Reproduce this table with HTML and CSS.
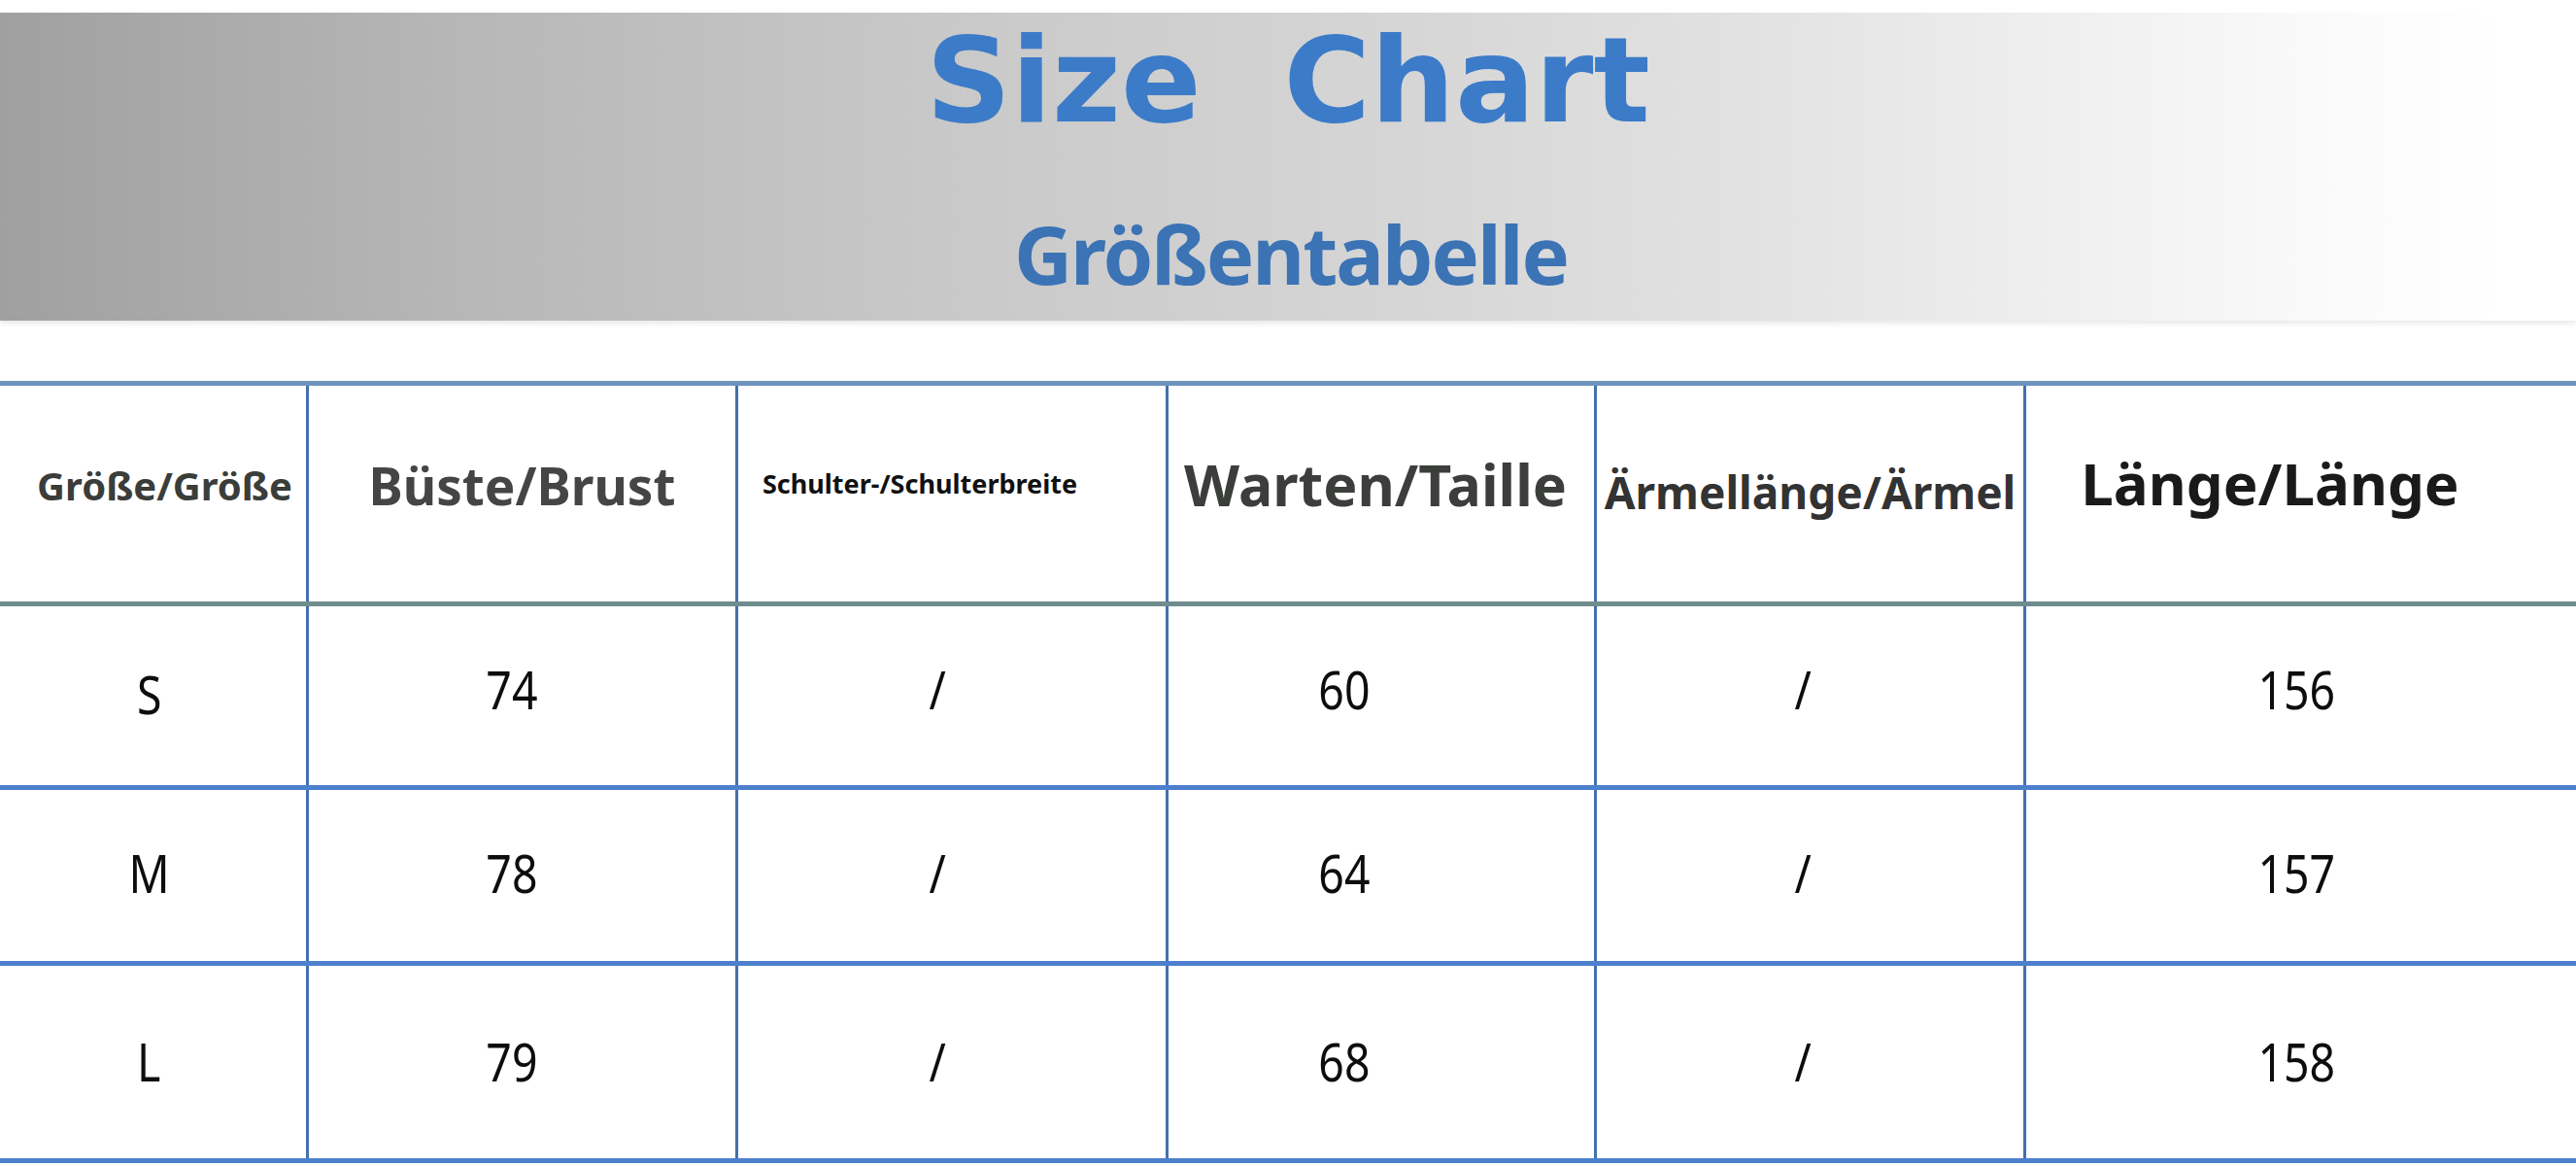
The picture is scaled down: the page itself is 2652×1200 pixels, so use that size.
FILE: index.html
```html
<!DOCTYPE html>
<html lang="de">
<head>
<meta charset="utf-8">
<title>Size Chart</title>
<link rel="stylesheet" href="styles.css">
</head>
<body>
<header class="banner">
  <h1 class="title">Size&nbsp; Chart</h1>
  <h2 class="subtitle">Größentabelle</h2>
</header>
<section class="chart">
  <div class="row head">
    <div class="cell"><span class="h h1">Größe/Größe</span></div>
    <div class="cell"><span class="h h2">Büste/Brust</span></div>
    <div class="cell"><span class="h h3">Schulter-/Schulterbreite</span></div>
    <div class="cell"><span class="h h4">Warten/Taille</span></div>
    <div class="cell"><span class="h h5">Ärmellänge/Ärmel</span></div>
    <div class="cell"><span class="h h6">Länge/Länge</span></div>
  </div>
  <div class="row body first r-s">
    <div class="cell"><span class="v">S</span></div>
    <div class="cell"><span class="v">74</span></div>
    <div class="cell"><span class="v">/</span></div>
    <div class="cell"><span class="v">60</span></div>
    <div class="cell"><span class="v">/</span></div>
    <div class="cell"><span class="v">156</span></div>
  </div>
  <div class="row body r-m">
    <div class="cell"><span class="v">M</span></div>
    <div class="cell"><span class="v">78</span></div>
    <div class="cell"><span class="v">/</span></div>
    <div class="cell"><span class="v">64</span></div>
    <div class="cell"><span class="v">/</span></div>
    <div class="cell"><span class="v">157</span></div>
  </div>
  <div class="row body last r-l">
    <div class="cell"><span class="v">L</span></div>
    <div class="cell"><span class="v">79</span></div>
    <div class="cell"><span class="v">/</span></div>
    <div class="cell"><span class="v">68</span></div>
    <div class="cell"><span class="v">/</span></div>
    <div class="cell"><span class="v">158</span></div>
  </div>
</section>
</body>
</html>
```
FILE: styles.css
```css
html, body {
  margin: 0;
  padding: 0;
  background: #ffffff;
}
body {
  width: 2652px;
  height: 1200px;
  overflow: hidden;
  font-family: "Noto Sans", "DejaVu Sans", sans-serif;
}
.banner {
  margin-top: 13px;
  height: 317px;
  box-sizing: border-box;
  padding-top: 9px;
  background: linear-gradient(to right, #a0a0a0 0%, #b7b7b7 18%, #c8c8c8 36%, #d6d6d6 55%, #e2e2e2 68%, #efefef 80%, #fafafa 90%, #ffffff 97%);
  box-shadow: 0 -3px 4px rgba(255,255,255,0.9), 0 3px 5px rgba(190,190,190,0.35);
  display: flex;
  flex-direction: column;
  align-items: center;
}
.title {
  margin: 0;
  padding-left: 0;
  font-family: "DejaVu Sans", sans-serif;
  font-weight: bold;
  font-size: 122px;
  line-height: 122px;
  letter-spacing: 0;
  color: #3c7bc8;
  white-space: nowrap;
}
.subtitle {
  margin: 75px 0 0 0;
  padding-left: 6px;
  font-family: "Noto Sans", sans-serif;
  font-weight: bold;
  font-size: 83px;
  line-height: 83px;
  letter-spacing: -2px;
  color: #3b73b5;
  white-space: nowrap;
}
.chart {
  margin-top: 62px;
}
.row {
  display: grid;
  grid-template-columns: 315px 442px 443px 441px 442px 1fr;
  border-top: 5px solid #4c7fcd;
}
.row.head {
  border-top-color: #6f93bd;
  height: 222px;
}
.row.first {
  border-top-color: #6f8c8e;
}
.r-s { height: 184px; }
.r-m { height: 176px; }
.r-l { height: 198px; }
.row.last {
  border-bottom: 5px solid #4c7fcd;
}
.cell {
  display: flex;
  align-items: center;
  justify-content: center;
  box-sizing: border-box;
  min-width: 0;
  white-space: nowrap;
}
.cell + .cell {
  border-left: 3px solid #4470ae;
}
.body .cell:nth-child(1) { padding-right: 8px; }
.body .cell:nth-child(2) { padding-right: 22px; }
.body .cell:nth-child(3) { padding-right: 30px; }
.body .cell:nth-child(4) { padding-right: 76px; }
.body .cell:nth-child(5) { padding-right: 14px; }
.body .cell:nth-child(6) { padding-right: 10px; }
.h {
  font-family: "Noto Sans", sans-serif;
  font-weight: bold;
  line-height: 1;
}
.h1 { font-size: 40px; color: #3a3d39; margin: 0 0 16px 24px; }
.h2 { font-size: 53px; color: #454545; margin-bottom: 18px; }
.h3 { font-size: 27px; color: #111111; margin: 0 66px 22px 0; }
.h4 { font-size: 59px; color: #3b3e3b; margin: 0 12px 20px 0; }
.h5 { font-size: 46px; color: #333333; margin-bottom: 4px; }
.h6 { font-size: 60px; color: #1a1a1a; margin: 0 64px 22px 0; }
.v {
  display: inline-block;
  font-family: "Noto Sans", sans-serif;
  font-weight: normal;
  font-size: 54px;
  line-height: 1;
  color: #0d0d0d;
  transform: scaleX(0.86);
}
.r-s .v { margin-top: -14px; }
.r-s .cell:nth-child(1) .v { margin-top: -4px; }
.r-m .v { margin-top: -6px; }
.r-l .v { margin-top: -2px; }
```
